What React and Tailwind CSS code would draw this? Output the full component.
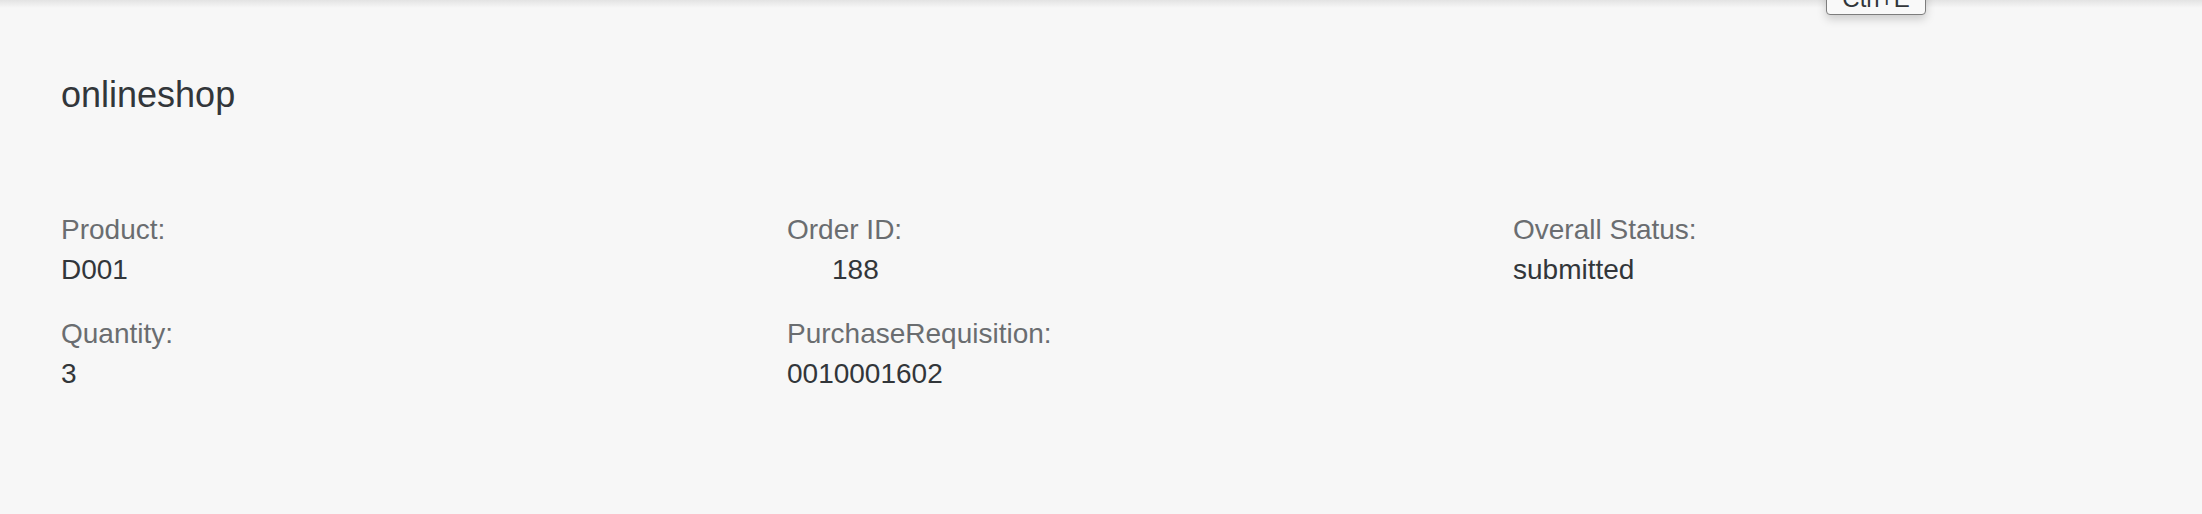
import React from "react";

function Field({ label, value, indent }) {
  return (
    <div className="flex flex-col">
      <div className="text-[28px] leading-[28px] text-[#6a6d70]">{label}</div>
      <div className={"mt-[12px] text-[28px] leading-[28px] text-[#32363a] " + (indent ? "pl-[45px]" : "")}>{value}</div>
    </div>
  );
}

export default function App() {
  return (
    <div
      className="relative w-full h-[514px] overflow-hidden bg-[#f7f7f7]"
      style={{ fontFamily: '"Liberation Sans", Arial, sans-serif' }}
    >
      <div className="h-[8px] bg-gradient-to-b from-[#e3e3e3] to-[#f7f7f7]" />
      <div className="pl-[61px]">
        <h1 className="mt-[69px] text-[36px] leading-[36px] text-[#32363a] font-normal">onlineshop</h1>
        <div className="mt-[103px] grid grid-cols-[726px_726px_1fr] gap-y-[36px]">
          <Field label="Product:" value="D001" />
          <Field label="Order ID:" value="188" indent />
          <Field label="Overall Status:" value="submitted" />
          <Field label="Quantity:" value="3" />
          <Field label="PurchaseRequisition:" value="0010001602" />
          <div />
        </div>
      </div>
      <div className="absolute left-[1826px] top-[-25px] w-[100px] h-[40px] rounded-[4px] border border-[#7d7d7d] bg-[#f9f9f9] shadow-[0_4px_10px_rgba(0,0,0,0.18)] pt-[11px] text-center">
        <span className="text-[24px] leading-[24px] text-[#32363a] block">Ctrl+E</span>
      </div>
    </div>
  );
}
